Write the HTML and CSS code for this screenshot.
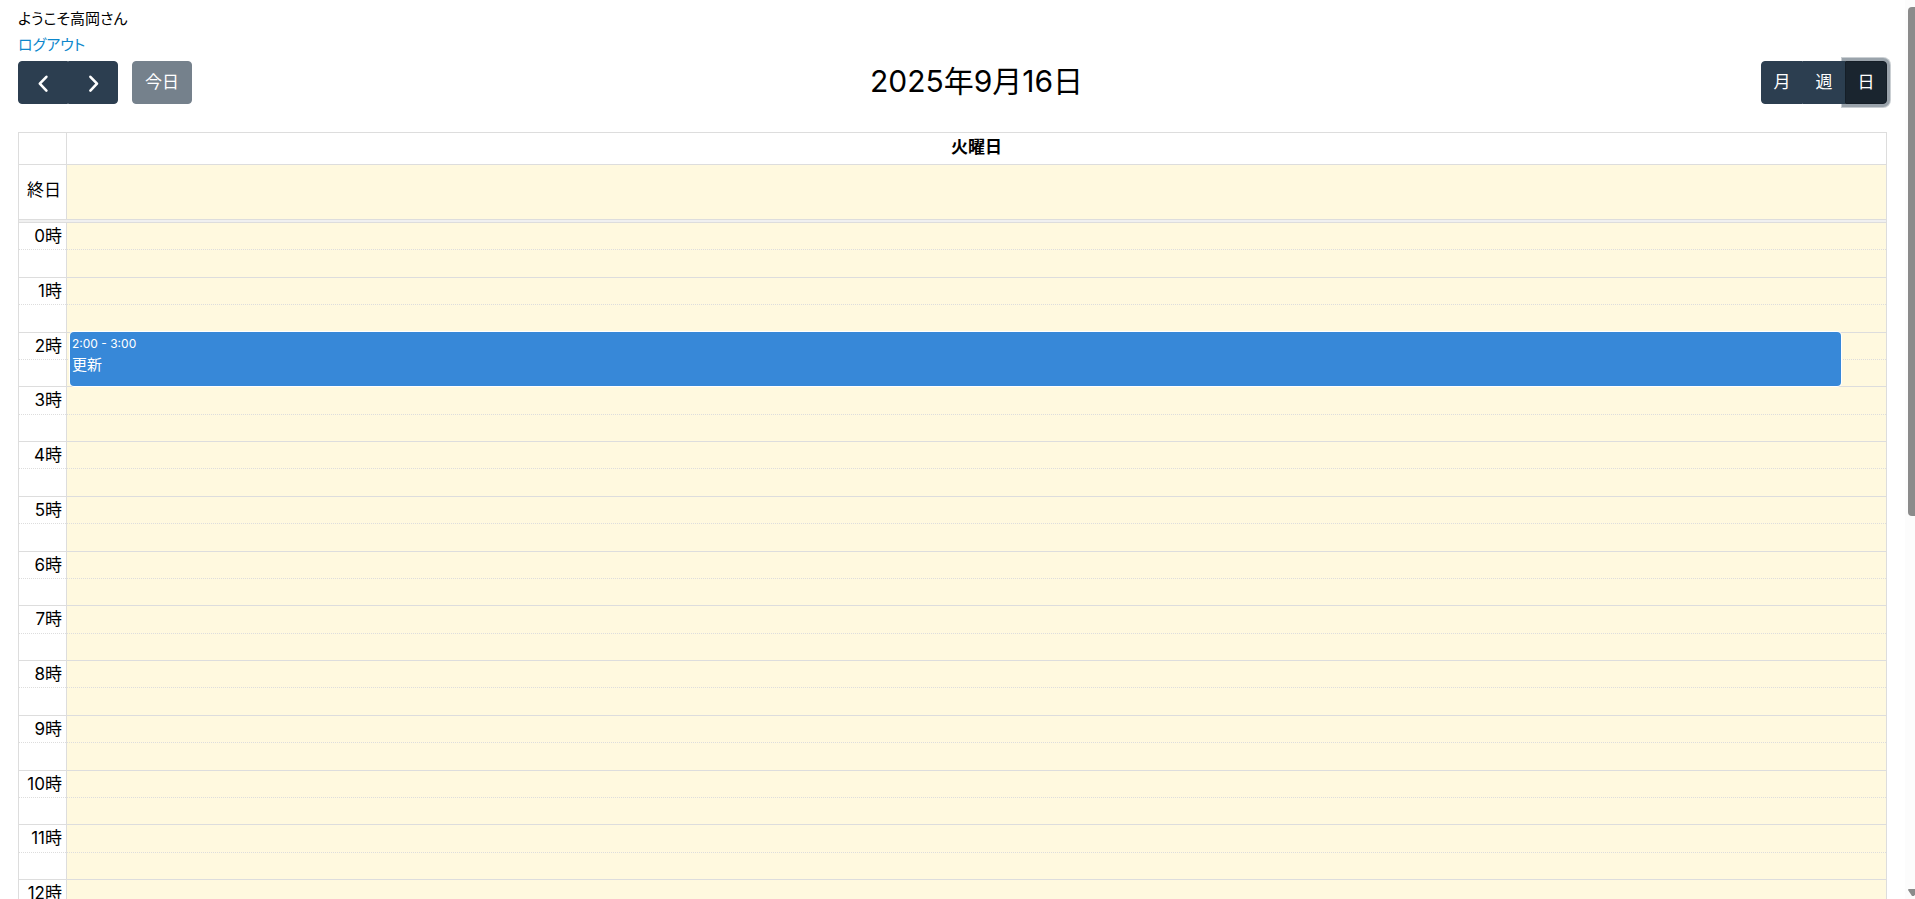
FILE: index.html
```html
<!DOCTYPE html>
<html lang="ja">
<head>
<meta charset="utf-8">
<meta name="viewport" content="width=device-width, initial-scale=1">
<title>カレンダー</title>
<link rel="stylesheet" href="styles.css">
</head>
<body>
<main class="page">
  <header class="welcome">
    <div>ようこそ高岡さん</div>
    <a class="logout" href="#">ログアウト</a>
  </header>
  <div class="toolbar">
    <div class="toolbar-left">
      <div class="button-group">
        <button class="button" type="button" aria-label="前へ"><svg class="icon" viewBox="0 0 24 24"><path d="M15.4 5.8 8.8 12.7l6.6 6.9"/></svg></button>
        <button class="button" type="button" aria-label="次へ"><svg class="icon" viewBox="0 0 24 24"><path d="M9.4 5.8l6.6 6.9-6.6 6.9"/></svg></button>
      </div>
      <button class="button today" type="button" disabled>今日</button>
    </div>
    <h1 class="title">2025年9月16日</h1>
    <div class="button-group">
      <button class="button" type="button">月</button>
      <button class="button" type="button">週</button>
      <button class="button active" type="button" aria-pressed="true">日</button>
    </div>
  </div>
  <section class="calendar">
    <div class="row head"><div class="axis"></div><div class="day-name">火曜日</div></div>
    <div class="row all-day"><div class="axis">終日</div><div class="day"></div></div>
    <div class="divider"></div>
    <div class="row times">
      <div class="slots labels">
        <div>0時</div><div></div><div>1時</div><div></div><div>2時</div><div></div><div>3時</div><div></div>
        <div>4時</div><div></div><div>5時</div><div></div><div>6時</div><div></div><div>7時</div><div></div>
        <div>8時</div><div></div><div>9時</div><div></div><div>10時</div><div></div><div>11時</div><div></div>
        <div>12時</div><div></div><div>13時</div><div></div><div>14時</div><div></div><div>15時</div><div></div>
        <div>16時</div><div></div><div>17時</div><div></div><div>18時</div><div></div><div>19時</div><div></div>
        <div>20時</div><div></div><div>21時</div><div></div><div>22時</div><div></div><div>23時</div><div></div>
      </div>
      <div class="slots day">
        <div></div><div></div><div></div><div></div><div></div><div></div><div></div><div></div>
        <div></div><div></div><div></div><div></div><div></div><div></div><div></div><div></div>
        <div></div><div></div><div></div><div></div><div></div><div></div><div></div><div></div>
        <div></div><div></div><div></div><div></div><div></div><div></div><div></div><div></div>
        <div></div><div></div><div></div><div></div><div></div><div></div><div></div><div></div>
        <div></div><div></div><div></div><div></div><div></div><div></div><div></div><div></div>
        <a class="event" href="#"><span class="event-time">2:00 - 3:00</span><span class="event-name">更新</span></a>
      </div>
    </div>
  </section>
</main>
<div class="scrollbar" aria-hidden="true"><div class="thumb"></div><svg class="arrow" viewBox="0 0 10 8"><path d="M0 1q0-1 1-1h8q1 0 1 1L6 7H4z"/></svg></div>
</body>
</html>
```
FILE: styles.css
```css
* { box-sizing: border-box; }
body {
  margin: 0;
  height: 100vh;
  display: flex;
  overflow: hidden;
  background: #fff;
  color: #000;
  font: 17px/26px Inter, "Noto Sans CJK JP", sans-serif;
}
.page { flex: 1; min-width: 0; padding: 6px 18px 0; overflow-y: auto; scrollbar-width: none; }
.welcome { font-size: 15px; font-feature-settings: "palt"; padding-bottom: 3px; }
.logout { color: #0d87cc; text-decoration: none; }
.toolbar { display: flex; justify-content: space-between; align-items: center; margin-bottom: 28px; }
.toolbar-left { display: flex; gap: 14px; }
.button-group { display: flex; }
.button {
  min-width: 42px;
  height: 43px;
  padding: 0 11px 2px;
  border: 1px solid #2c3e50;
  border-radius: 4px;
  background: #2c3e50;
  color: #fff;
  font: inherit;
  line-height: 24px;
}
.toolbar-left .button { padding: 0 12px 2px; }
.toolbar-left .button:has(.icon) { padding-bottom: 0; }
.button-group .button:not(:last-child) { border-top-right-radius: 0; border-bottom-right-radius: 0; }
.button-group .button:not(:first-child) { border-top-left-radius: 0; border-bottom-left-radius: 0; }
.button.today { opacity: .65; }
.button.active {
  background: #1a252f;
  border-color: #151e27;
  box-shadow: 0 0 0 3px rgba(44, 62, 80, .3), 0 0 0 4px rgba(44, 62, 80, .25);
}
.icon {
  display: block;
  width: 24px;
  height: 24px;
  fill: none;
  stroke: #fff;
  stroke-width: 2.6;
  stroke-linecap: round;
  stroke-linejoin: round;
}
.title { margin: 0; padding-bottom: 3px; font-size: 30px; font-weight: 400; line-height: 40px; }
.calendar { border: 1px solid #ddd; }
.row { display: grid; grid-template-columns: 48px 1fr; }
.axis, .labels { border-right: 1px solid #ddd; }
.head { border-bottom: 1px solid #ddd; }
.day-name { padding: 1px 0 4px; font-weight: 700; text-align: center; }
.axis { padding-right: 5px; text-align: right; }
.all-day .axis { padding-top: 12px; padding-bottom: 16px; }
.day { background: #fff9df; }
.divider { height: 3px; border-top: 1px solid #ddd; background: #f0f0f0; }
.slots { display: grid; grid-template-rows: repeat(48, 1fr); height: 1314px; position: relative; }
.slots > div { min-height: 0; border-top: 1px solid #ddd; }
.slots > div:nth-child(even) { border-top-style: dotted; }
.labels { text-align: right; line-height: 26px; white-space: nowrap; }
.labels > div { padding-right: 4px; }
.event {
  position: absolute;
  top: calc(100% / 12);
  left: 3px;
  right: 2.5%;
  height: calc(100% / 24);
  display: flex;
  flex-direction: column;
  padding: 2px;
  border-radius: 4px;
  background: #3788d8;
  box-shadow: 0 0 0 1px #fff;
  color: #fff;
  font-size: 15px;
  line-height: 22px;
  text-decoration: none;
}
.event-time { font-size: 12px; line-height: 20px; }
.scrollbar { position: relative; width: 10px; padding: 7px 0 0 3px; background: #fcfcfc; }
.thumb { height: 509px; border-radius: 4px 0 0 4px; background: #8b8b8b; }
.arrow { position: absolute; left: 3px; bottom: 2px; width: 10px; height: 8px; fill: #8b8b8b; }
```
